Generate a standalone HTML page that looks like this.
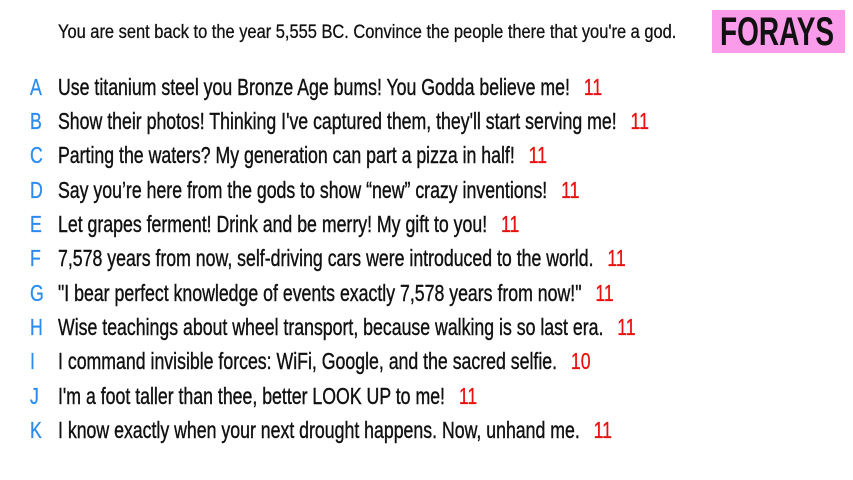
<!DOCTYPE html>
<html><head><meta charset="utf-8"><style>
html,body{margin:0;padding:0;background:#fff;width:853px;height:480px;overflow:hidden;position:relative}
body{font-family:"Liberation Sans",sans-serif;color:#111}
.q{position:absolute;left:58px;top:22px;font-size:19px;white-space:nowrap;transform:scaleX(0.865);transform-origin:0 0;-webkit-text-stroke:0.3px #111}
.logo{position:absolute;left:712px;top:10px;width:133px;height:43px;background:#fa9cea;overflow:hidden}
.logo div{position:absolute;left:8px;top:0;font-size:40px;font-weight:bold;line-height:44px;color:#111;transform:scaleX(0.7);transform-origin:0 0;white-space:nowrap}
.r{position:absolute;left:0;font-size:23px;white-space:nowrap;line-height:24px}
.r b{position:absolute;left:30px;color:#2a8cf0;font-weight:normal;transform:scaleX(0.77);transform-origin:0 0;-webkit-text-stroke:0.3px #2a8cf0}
.r span{position:absolute;left:58px;transform:scaleX(0.77);transform-origin:0 0;-webkit-text-stroke:0.4px #111}
.r i{font-style:normal;color:#e8110f;margin-left:18px;-webkit-text-stroke:0.3px #e8110f}
</style></head><body>
<div class="q">You are sent back to the year 5,555 BC. Convince the people there that you're a god.</div>
<div class="logo"><div>FORAYS</div></div>
<div class="r" style="top:75px"><b>A</b><span>Use titanium steel you Bronze Age bums! You Godda believe me!<i>11</i></span></div>
<div class="r" style="top:109px"><b>B</b><span>Show their photos! Thinking I've captured them, they'll start serving me!<i>11</i></span></div>
<div class="r" style="top:143px"><b>C</b><span>Parting the waters? My generation can part a pizza in half!<i>11</i></span></div>
<div class="r" style="top:178px"><b>D</b><span>Say you’re here from the gods to show “new” crazy inventions!<i>11</i></span></div>
<div class="r" style="top:212px"><b>E</b><span>Let grapes ferment! Drink and be merry! My gift to you!<i>11</i></span></div>
<div class="r" style="top:246px"><b>F</b><span>7,578 years from now, self-driving cars were introduced to the world.<i>11</i></span></div>
<div class="r" style="top:281px"><b>G</b><span>"I bear perfect knowledge of events exactly 7,578 years from now!"<i>11</i></span></div>
<div class="r" style="top:315px"><b>H</b><span>Wise teachings about wheel transport, because walking is so last era.<i>11</i></span></div>
<div class="r" style="top:349px"><b>I</b><span>I command invisible forces: WiFi, Google, and the sacred selfie.<i>10</i></span></div>
<div class="r" style="top:384px"><b>J</b><span>I'm a foot taller than thee, better LOOK UP to me!<i>11</i></span></div>
<div class="r" style="top:418px"><b>K</b><span>I know exactly when your next drought happens. Now, unhand me.<i>11</i></span></div>
</body></html>
